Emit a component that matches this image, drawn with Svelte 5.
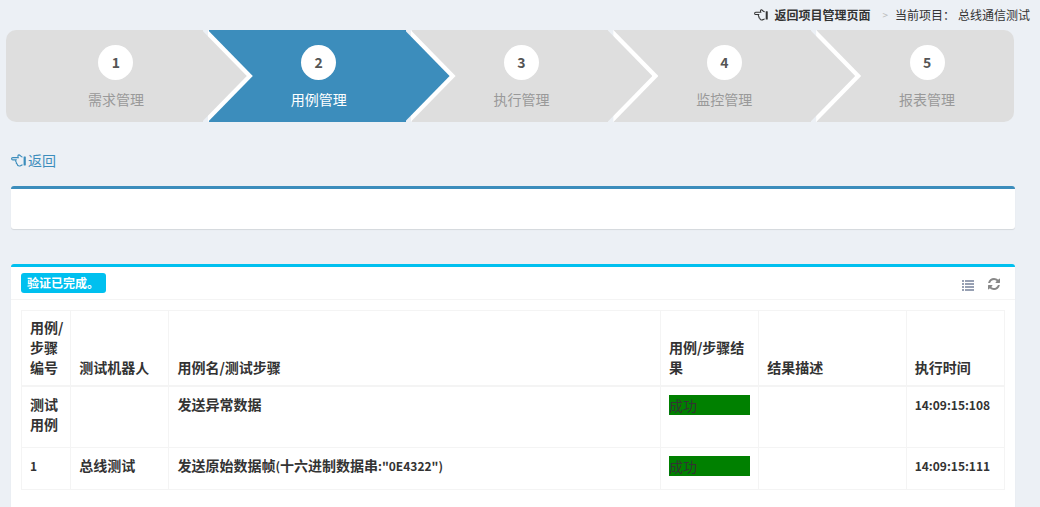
<script lang="ts">
  const steps: string[] = ['需求管理', '用例管理', '执行管理', '监控管理', '报表管理'];
  const activeStep = 1;

  const columns: { label: string; width: number }[] = [
    { label: '用例/\n步骤\n编号', width: 5 },
    { label: '测试机器人', width: 10 },
    { label: '用例名/测试步骤', width: 50 },
    { label: '用例/步骤结\n果', width: 10 },
    { label: '结果描述', width: 15 },
    { label: '执行时间', width: 10 },
  ];

  const rows = [
    { id: '测试用例', robot: '', name: '发送异常数据', result: '成功', note: '', time: '14:09:15:108' },
    {
      id: '1',
      robot: '总线测试',
      name: '发送原始数据帧(十六进制数据串:"0E4322")',
      result: '成功',
      note: '',
      time: '14:09:15:111',
    },
  ];
</script>

{#snippet hand()}
  <svg class="hand" viewBox="0 0 15 13" aria-hidden="true">
    <path
      d="M11.5 3C9.8 3 9.4 1 7.8 .9C6.6 1 6.8 2.4 7.3 3.6H1.8C.2 3.6.2 5.9 1.8 5.9H5C4.5 6.7 4.6 7.7 5.3 8.2C5.1 9.1 5.5 9.9 6.2 10.1C6.3 11.3 7 12 8.2 12C9.7 12 10.2 10.9 11.5 10.9"
      fill="none"
      stroke="currentColor"
      stroke-width="1.1"
    />
    <rect x="12.6" y="2.5" width="2.2" height="9" rx=".4" fill="currentColor" />
  </svg>
{/snippet}

<!-- latin runs are set a little smaller than the Chinese text round them -->
{#snippet mixed(text: string)}
  {#each text.split(/([!-~]+)/) as part, i}{#if i % 2}<span class="latin">{part}</span>{:else}{part}{/if}{/each}
{/snippet}

<nav class="breadcrumb">
  <a class="home" href="#projects">{@render hand()}<b>返回项目管理页面</b></a>
  <span class="sep">&gt;</span>
  <span class="current">当前项目：</span>
  <span>总线通信测试</span>
</nav>

<ol class="steps">
  {#each steps as step, i}
    <li class="step" class:active={i === activeStep}>
      <a href="#step-{i + 1}">
        <span class="number">{i + 1}</span>
        <span>{step}</span>
      </a>
    </li>
  {/each}
</ol>

<main>
  <a class="back" href="#back">{@render hand()}返回</a>

  <section class="box primary"></section>

  <section class="box info">
    <header>
      <span class="label">验证已完成。</span>
      <div class="tools">
        <button type="button" class="list" aria-label="列表">
          <svg viewBox="0 0 12 12" aria-hidden="true">
            <path d="M0 0h2v2H0zM3 0h9v2H3zM0 3h2v2H0zM3 3h9v2H3zM0 6h2v2H0zM3 6h9v2H3zM0 9h2v2H0zM3 9h9v2H3z" fill="currentColor" />
          </svg>
        </button>
        <button type="button" class="refresh" aria-label="刷新">
          <svg viewBox="128 128 1536 1536" aria-hidden="true">
            <path
              d="M1639 1056q0 5-1 7-64 268-268 434.5t-478 166.5q-146 0-282.5-55t-243.5-157l-129 129q-19 19-45 19t-45-19-19-45v-448q0-26 19-45t45-19h448q26 0 45 19t19 45-19 45l-137 137q71 66 161 102t187 36q134 0 250-65t186-179q11-17 53-117 8-23 30-23h192q13 0 22.5 9.5t9.5 22.5zm25-800v448q0 26-19 45t-45 19h-448q-26 0-45-19t-19-45 19-45l138-138q-148-137-349-137-134 0-250 65t-186 179q-11 17-53 117-8 23-30 23h-199q-13 0-22.5-9.5t-9.5-22.5v-7q65-268 270-434.5t480-166.5q146 0 284 55.5t245 156.5l130-129q19-19 45-19t45 19 19 45z"
              fill="currentColor"
            />
          </svg>
        </button>
      </div>
    </header>

    <div class="body">
      <table>
        <colgroup>
          {#each columns as col}
            <col style="width: {col.width}%" />
          {/each}
        </colgroup>
        <thead>
          <tr>
            {#each columns as col}
              <th scope="col">{col.label}</th>
            {/each}
          </tr>
        </thead>
        <tbody>
          {#each rows as row}
            <tr>
              <td>{@render mixed(row.id)}</td>
              <td>{row.robot}</td>
              <td>{@render mixed(row.name)}</td>
              <td><div class="result">{row.result}</div></td>
              <td>{row.note}</td>
              <td>{@render mixed(row.time)}</td>
            </tr>
          {/each}
        </tbody>
      </table>
    </div>
  </section>
</main>

<style>
  :global(body) {
    background: #ecf0f5;
    color: #333;
    font-family: 'Noto Sans CJK SC', sans-serif;
    font-size: 14px;
    line-height: 20px;
  }

  a {
    color: inherit;
    text-decoration: none;
  }

  .hand {
    width: 15px;
    height: 13px;
    flex: none;
  }

  .breadcrumb {
    display: flex;
    justify-content: flex-end;
    align-items: center;
    height: 30px;
    padding-right: 10px;
    font-size: 12px;
  }

  .home {
    display: flex;
    align-items: center;
    gap: 6px;
  }

  .home .hand {
    width: 14px;
    height: 12px;
  }

  .sep {
    margin: 0 7px 0 12px;
    color: #bbb;
    font-size: 10px;
  }

  .current {
    margin-right: 3px;
  }

  .steps {
    display: grid;
    grid-template-columns: repeat(5, 1fr);
    gap: 6px;
    margin: 0 26px 0 6px;
    padding: 0;
    list-style: none;
  }

  .step {
    position: relative;
    height: 92px;
    background: #dedede;
    color: #999;
  }

  .step:first-child {
    border-radius: 10px 0 0 10px;
  }

  .step:last-child {
    border-radius: 0 10px 10px 0;
  }

  .step.active {
    background: #3c8dbc;
    color: #fff;
  }

  .step a {
    display: flex;
    flex-direction: column;
    align-items: center;
    gap: 9px;
    padding: 15px 0 0 23px;
  }

  .number {
    width: 35px;
    border-radius: 50%;
    background: #fff;
    color: #555;
    font-weight: bold;
    line-height: 35px;
    text-align: center;
  }

  /* arrow head, with a white one peeking out from behind it */
  .step:not(:last-child)::before,
  .step:not(:last-child)::after {
    content: '';
    position: absolute;
    top: 0;
    left: calc(100% - 1px);
    z-index: 2;
    width: 45px;
    height: 100%;
    background: inherit;
    clip-path: polygon(0 0, 100% 50%, 0 100%);
  }

  .step:not(:last-child)::before {
    z-index: 1;
    margin-left: 6px;
    background: #fff;
  }

  main {
    padding: 28px 25px 0 11px;
  }

  .back {
    display: inline-flex;
    align-items: center;
    gap: 2px;
    color: #3c8dbc;
  }

  .box {
    border-top: 3px solid #d2d6de;
    border-radius: 3px;
    background: #fff;
    box-shadow: 0 1px 1px rgba(0, 0, 0, 0.1);
  }

  .box.primary {
    min-height: 40px;
    margin: 15px 0 35px;
    border-color: #3c8dbc;
  }

  .box.info {
    border-color: #00c0ef;
  }

  header {
    display: flex;
    justify-content: space-between;
    align-items: center;
    padding: 6px 15px 6px 10px;
    border-bottom: 1px solid #f4f4f4;
  }

  .label {
    padding: 0 6px;
    min-width: 73px;
    border-radius: 3px;
    background: #00c0ef;
    color: #fff;
    font-size: 12px;
    font-weight: bold;
  }

  .tools {
    display: flex;
    align-items: center;
    gap: 14px;
    padding-top: 2px;
  }

  .tools button {
    display: flex;
    padding: 0;
    border: 0;
    background: none;
    color: #97a0b3;
    cursor: pointer;
  }

  .tools svg {
    width: 12px;
    height: 12px;
  }

  .tools .list {
    padding-top: 4px;
  }

  .tools .refresh {
    color: #888;
  }

  .body {
    padding: 10px 10px 20px;
  }

  table {
    width: 100%;
    table-layout: fixed;
    border-collapse: collapse;
  }

  th,
  td {
    border: 1px solid #f4f4f4;
    font-weight: bold;
    text-align: left;
  }

  th {
    padding: 6px 8px 8px;
    border-bottom-width: 2px;
    vertical-align: bottom;
    white-space: pre;
  }

  td {
    padding: 7px 8px 13px;
    vertical-align: top;
  }

  .latin {
    font-size: 12px;
  }

  .result {
    margin-top: 1px;
    background: green;
    font-weight: normal;
  }
</style>
